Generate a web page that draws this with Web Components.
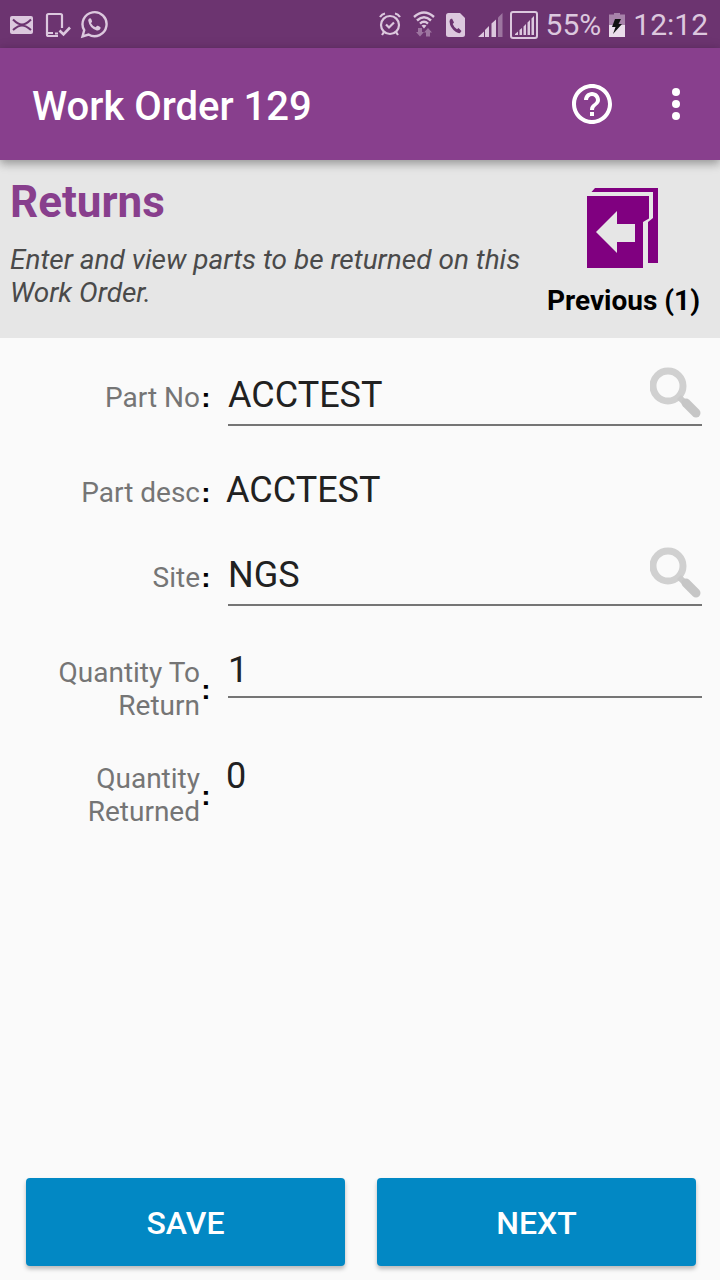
<!DOCTYPE html>
<html lang="en">
<head>
<meta charset="utf-8">
<meta name="viewport" content="width=device-width, initial-scale=1">
<title>Work Order 129</title>
<style>
  body { margin: 0; font-family: Roboto, "Liberation Sans", sans-serif; background: #fafafa; color: #212121; }
</style>
</head>
<body>
<work-order-page></work-order-page>

<script>
const define = (name, html, setup) => {
  const template = document.createElement('template');
  template.innerHTML = '<style>*{box-sizing:border-box}</style>' + html;
  customElements.define(name, class extends HTMLElement {
    constructor() {
      super();
      this.attachShadow({ mode: 'open' }).append(template.content.cloneNode(true));
    }
    connectedCallback() { if (setup) setup(this, this.shadowRoot); }
  });
};

define('status-bar', `
<style>
  :host { display: flex; align-items: center; justify-content: space-between; height: 48px; padding: 2px 12px 0 8px;
    background: #6c3470; color: #dcc8de; font-size: 30px; line-height: 36px; }
  div { display: flex; align-items: center; }
  svg { display: block; flex: none; }
  .left { gap: 8px; }
  .right { gap: 8px; }
  .signal { margin-right: -8px; }
</style>
<div class="left">
  <svg width="28" height="32" viewBox="0 0 28 32"><rect x="2" y="7" width="23" height="18" rx="2" fill="#dcc8de"/><path d="M5 10.500Q10 15.500 14 15.500T23 10.500M5 21Q10 16.500 14 16.500T23 21" fill="none" stroke="#6c3470" stroke-width="2"/></svg>
  <svg width="28" height="32" viewBox="0 0 28 32" fill="none" stroke="#dcc8de" stroke-width="2.200"><path d="M14 27H4.500Q3 27 3 25.500V6.500Q3 5 4.500 5H16.500Q18 5 18 6.500V19M3 24H9M11 24.500H14"/><path d="M15.500 21.500L19.500 25.500L26 18.500" stroke-width="2.600"/></svg>
  <svg width="28" height="32" viewBox="0 0 28 32"><g transform="translate(-1 -1)"><path d="M3.500 28.500L5.200 22.200A12 12 0 1 1 9.500 26.500Z" fill="none" stroke="#dcc8de" stroke-width="2.400"/><path d="M9.200 12.500Q9.300 10.700 10.800 10.200Q11.800 10 12.200 11L13 13Q13.300 13.700 12.700 14.300L12 15.200Q13.800 18.300 16.600 19.300L17.900 17.900Q18.300 17.500 19 17.800L21.200 19Q21.900 19.500 21.500 20.500Q20.500 22.800 17.800 22.400Q10.500 20.300 9.200 12.500Z" fill="#dcc8de"/></g></svg>
</div>
<div class="right">
  <svg width="24" height="28" viewBox="0 0 24 28" fill="none" stroke="#dcc8de" stroke-width="2.200"><circle cx="12" cy="14" r="9"/><path d="M8 13.500L11 16.500L16 11.500M2 6Q4 3 7 2.500M22 6Q20 3 17 2.500M6 21L4 24M18 21L20 24"/></svg>
  <svg width="28" height="30" viewBox="0 0 28 30"><g fill="none" stroke="#dcc8de" stroke-width="2.400"><path d="M4 7Q14 -2 24 7M7 10.500Q14 4 21 10.500M10 13.700Q14 10 18 13.700"/></g><path d="M11.500 15.500Q14 14 16.500 15.500L14 18.500Z" fill="#dcc8de"/><path d="M8 18h4v4h2l-4 4.500L6 22h2zM16 26.500v-4h-2l4-4.500l4 4.500h-2v4z" fill="#9d75a0"/></svg>
  <svg width="20" height="26" viewBox="0 0 20 26"><path d="M2.500 1H14L19 6V22.500Q19 25 16.500 25H2.500Q0 25 0 22.500V3.500Q0 1 2.500 1Z" fill="#dcc8de"/><path d="M4 7.500L6 6.500L8 10.500L6.700 12Q8 15.500 11 17.200L12.500 16L15.500 19L14 21Q12.500 21.500 10 20Q4 16 3.500 9.500Z" fill="#6c3470"/></svg>
  <svg class="signal" width="36" height="26" viewBox="0 0 36 26"><path d="M4 25L10 19.500V25ZM11 18L15 14V25H11ZM17.500 11.500L22 7.500V25H17.500Z" fill="#dcc8de"/><path d="M24 5.500L28.500 1V25H24Z" fill="#9d75a0"/></svg>
  <svg width="28" height="28" viewBox="0 0 28 28"><rect x="1" y="1" width="26" height="26" rx="2" fill="none" stroke="#dcc8de" stroke-width="2"/><path d="M5 24V23L8 20.500V24ZM9.500 19L12 17V24H9.500ZM13.500 15.500L16 13V24H13.500ZM17.500 11.500L20 9V24H17.500ZM21.500 7.500L24 5V24H21.500Z" fill="#dcc8de"/></svg>
  <span>55%</span>
  <svg width="16" height="26" viewBox="0 0 16 26"><path d="M0 2.500H5V1H11V2.500H16V13H0Z" fill="#a782aa"/><path d="M0 13H16V25H0Z" fill="#eaddeb"/><path d="M6 7H12L9.500 12H13L4 22L6.500 15H3Z" fill="#111"/></svg>
  <span>12:12</span>
</div>`);

define('app-bar', `
<style>
  :host { display: flex; align-items: center; height: 112px; padding: 0 20px 0 32px; background: #883f8d; color: #fff;
    box-shadow: 0 4px 8px rgba(0,0,0,.2), 0 2px 12px rgba(0,0,0,.2); position: relative; z-index: 1; }
  h1 { flex: 1; margin: 0; padding-top: 6px; font-size: 40px; line-height: 48px; font-weight: 500; }
  button { border: 0; padding: 0; background: none; color: inherit; }
  svg { display: block; }
  .help { margin-right: 36px; }
</style>
<h1><slot></slot></h1>
<button class="help" aria-label="Help"><svg width="48" height="48" viewBox="0 0 24 24" fill="#fff"><path d="M11 18h2v-2h-2v2zm1-16C6.480 2 2 6.480 2 12s4.480 10 10 10 10-4.480 10-10S17.520 2 12 2zm0 18c-4.410 0-8-3.590-8-8s3.590-8 8-8 8 3.590 8 8-3.590 8-8 8zm0-14c-2.210 0-4 1.790-4 4h2c0-1.100.9-2 2-2s2 .9 2 2c0 2-3 1.750-3 5h2c0-2.250 3-2.500 3-5 0-2.210-1.790-4-4-4z"/></svg></button>
<button aria-label="More options"><svg width="48" height="48" viewBox="0 0 24 24" fill="#fff"><circle cx="12" cy="6" r="2"/><circle cx="12" cy="12" r="2"/><circle cx="12" cy="18" r="2"/></svg></button>`);

define('section-header', `
<style>
  :host { display: flex; justify-content: space-between; min-height: 178px; padding: 16px 20px 20px 10px; gap: 16px; background: #e6e6e6; }
  h2 { margin: 0 0 15px; font-size: 44px; line-height: 52px; font-weight: 700; color: #883f8d; }
  p { margin: 0; font-size: 28px; line-height: 33px; font-style: italic; color: #4a4a4a; }
  button { flex: none; align-self: flex-start; display: flex; flex-direction: column; align-items: center; gap: 12px; border: 0; padding: 8px 0 0;
    background: none; font: 700 28px/33px Roboto, sans-serif; color: #000; }
  svg { display: block; }
</style>
<div><h2><slot name="title"></slot></h2><p><slot></slot></p></div>
<button><svg width="74" height="88" viewBox="0 0 74 88" fill="#800080"><path d="M5.500 8L9 4H72V79H62V38L67 34V8Z"/><path d="M1 12H63V34.500L57 38V84H1Z"/><path d="M10 48L31 27V40H49V58H31V69Z" fill="#e6e6e6"/></svg><slot name="action"></slot></button>`);

define('form-field', `
<style>
  :host { display: grid; grid-template-columns: 228px minmax(0, 1fr); align-items: start; }
  .caption { display: flex; align-items: center; padding-top: 7px; }
  label { width: 200px; padding-left: 10px; text-align: right; font-size: 28px; line-height: 33px; color: #757575; }
  .colon { width: 12px; font: 700 28px/33px "Liberation Sans", sans-serif; color: #000; text-align: center; }
  .box { display: flex; position: relative; height: 52px; border-bottom: 2px solid #757575; margin-bottom: 10px; }
  input { width: 100%; min-width: 0; height: 42px; border: 0; padding: 0; outline: 0; background: none; font: 36px/42px Roboto, sans-serif; color: #212121; }
  output { display: block; height: 42px; margin: 0 0 10px -2px; font-size: 36px; line-height: 42px; }
  .search { position: absolute; right: 0; top: -8px; border: 0; padding: 0; background: none; }
  svg { display: block; }
  :host([kind="number"]) .box { height: 49px; margin-bottom: 0; }
  :host(:not([kind="lookup"])) .search { display: none; }
  :host([kind="text"]) .box, :host(:not([kind="text"])) output { display: none; }
</style>
<div class="caption"><label for="value"></label><span class="colon">:</span></div>
<div>
  <div class="box"><input id="value" type="text"><button class="search" aria-label="Search"><svg width="52" height="54" viewBox="0 0 52 54"><circle cx="18" cy="20" r="15" fill="none" stroke="#d0d0d0" stroke-width="7"/><path d="M29 31L35 37" stroke="#cacaca" stroke-width="6"/><path d="M36 37L46 47" stroke="#c6c6c6" stroke-width="9" stroke-linecap="round"/></svg></button></div>
  <output></output>
</div>`, (host, root) => {
  const label = root.querySelector('label');
  const input = root.querySelector('input');
  const output = root.querySelector('output');
  label.textContent = host.getAttribute('label');
  if (host.getAttribute('kind') === 'text') {
    input.removeAttribute('id');
    output.id = 'value';
    output.textContent = host.getAttribute('value');
  } else {
    input.value = host.getAttribute('value');
  }
});

define('action-button', `
<style>
  :host { display: block; }
  button { display: block; width: 100%; height: 88px; border: 0; padding: 2px 0 0; border-radius: 4px; background: #0288c4; color: #fff;
    font: 500 32px/40px Roboto, sans-serif; text-transform: uppercase; box-shadow: 0 3px 4px rgba(0,0,0,.26); }
</style>
<button><slot></slot></button>`);

define('work-order-page', `
<style>
  :host { display: flex; flex-direction: column; min-height: 100vh; }
  form { flex: 1; display: flex; flex-direction: column; gap: 33px; padding: 36px 18px 32px 0; }
  footer { display: grid; grid-template-columns: 1fr 1fr; gap: 32px; padding: 0 24px 14px 26px; }
</style>
<status-bar></status-bar>
<app-bar>Work Order 129</app-bar>
<section-header><span slot="title">Returns</span>Enter and view parts to be returned on this Work Order.<span slot="action">Previous (1)</span></section-header>
<form>
  <form-field kind="lookup" label="Part No" value="ACCTEST"></form-field>
  <form-field kind="text" label="Part desc" value="ACCTEST"></form-field>
  <form-field kind="lookup" label="Site" value="NGS"></form-field>
  <form-field kind="number" label="Quantity To Return" value="1"></form-field>
  <form-field kind="text" label="Quantity Returned" value="0"></form-field>
</form>
<footer><action-button>Save</action-button><action-button>Next</action-button></footer>`);
</script>
</body>
</html>
